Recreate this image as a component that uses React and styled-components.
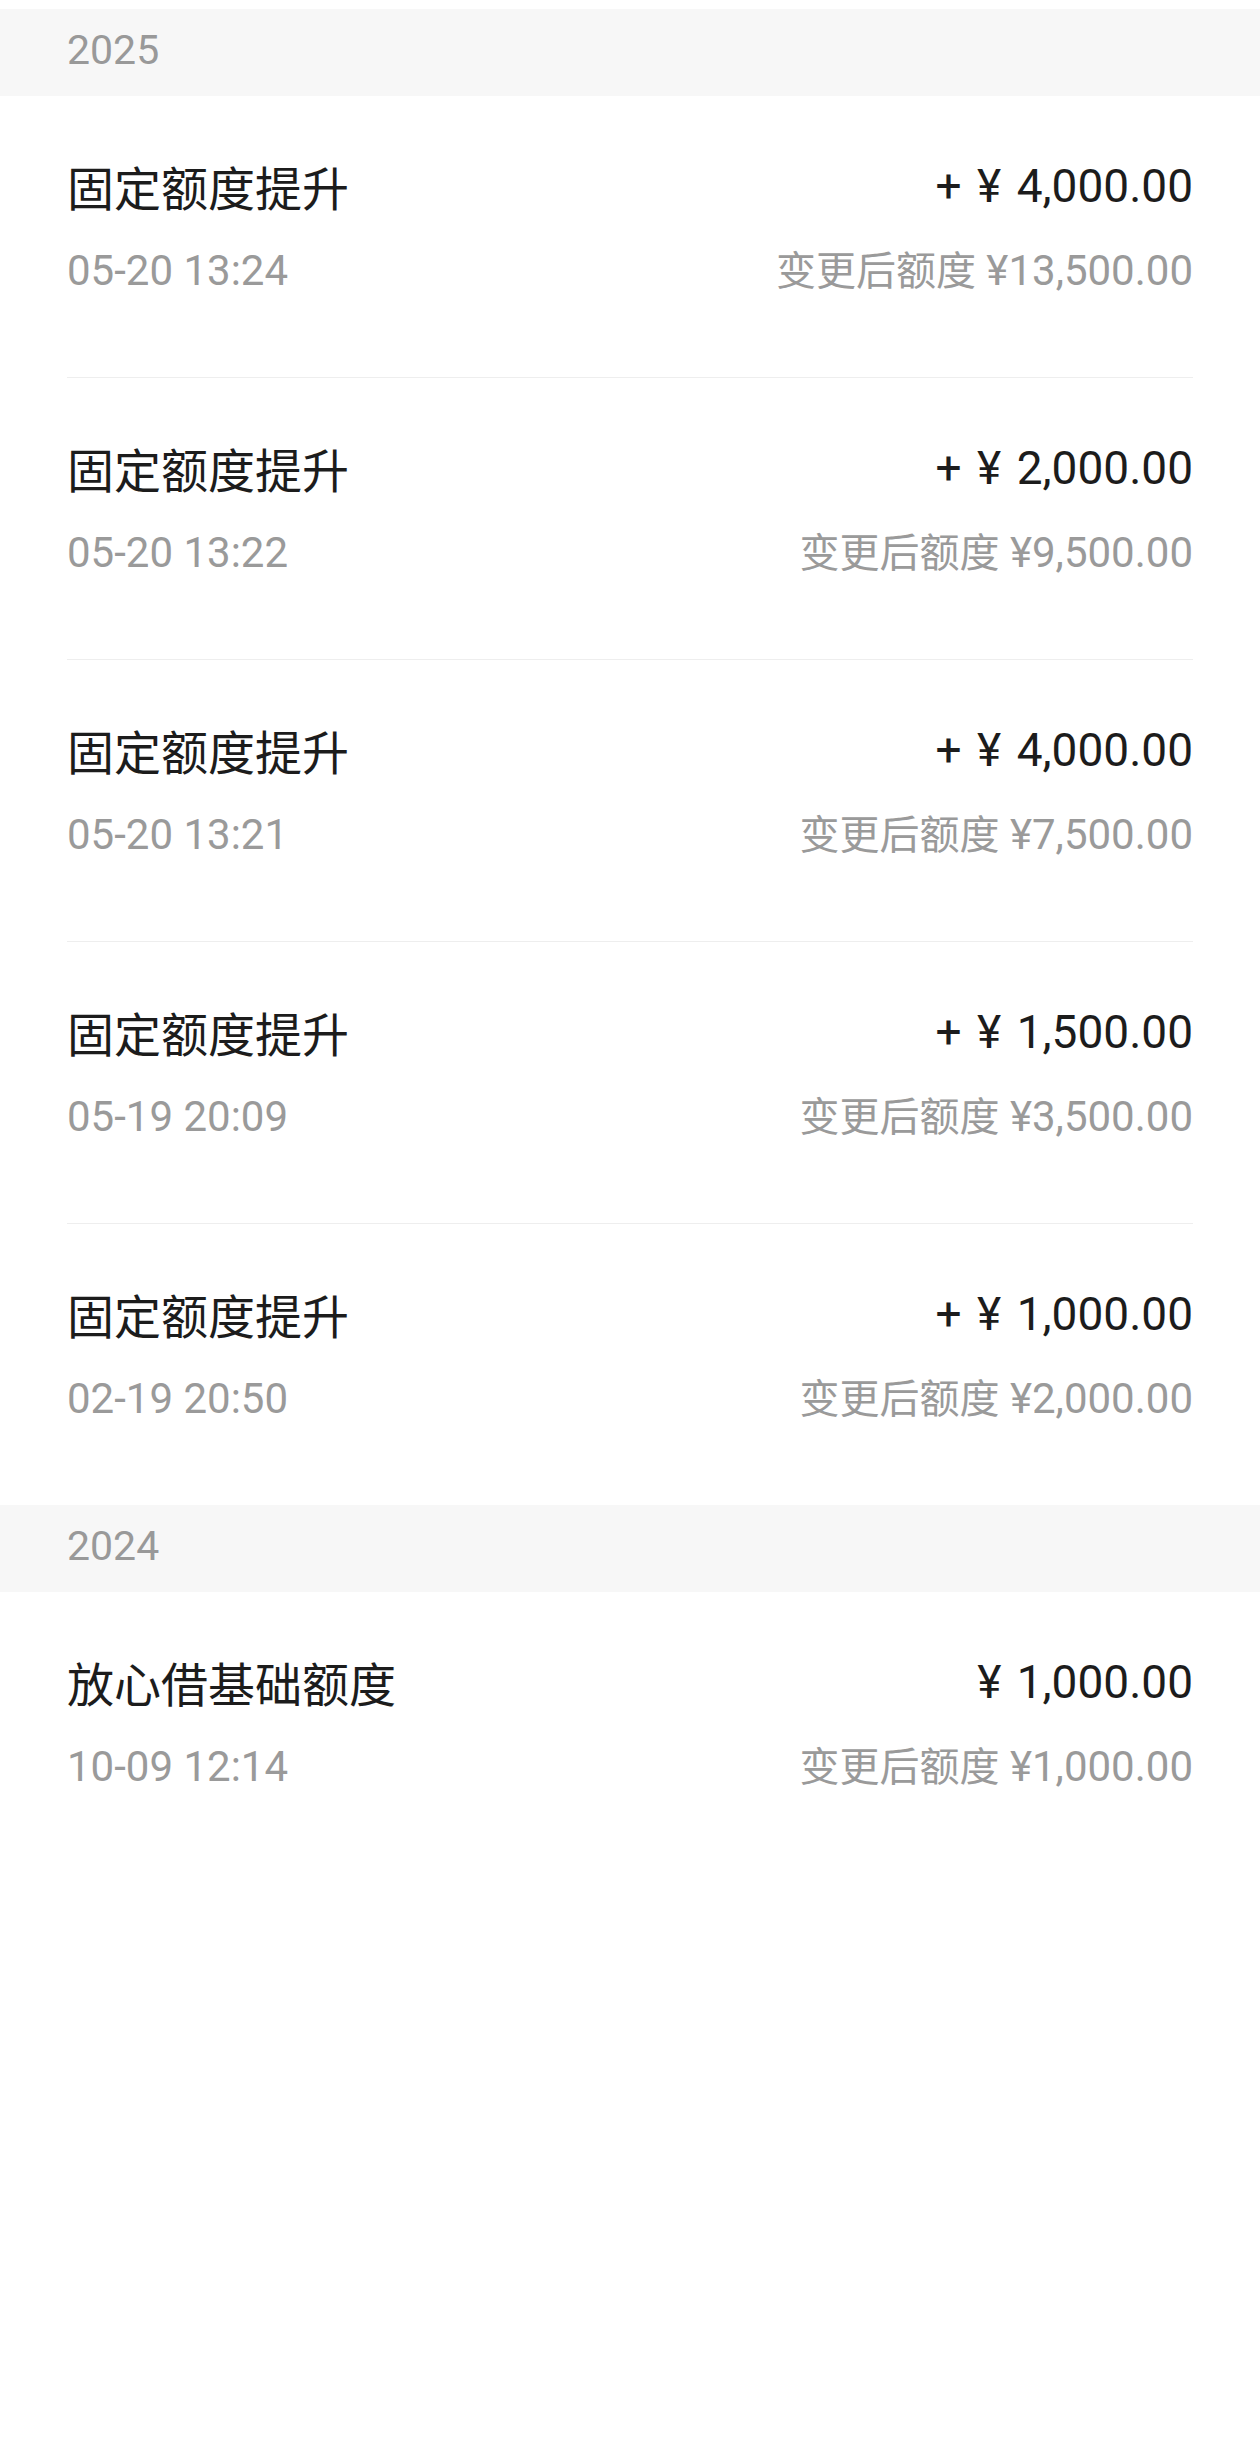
import React from "react";
import styled, { createGlobalStyle } from "styled-components";

const GlobalStyle = createGlobalStyle`
  html, body {
    margin: 0;
    padding: 0;
    background: #ffffff;
  }
  body {
    font-family: Roboto, "Noto Sans CJK SC", sans-serif;
    -webkit-font-smoothing: antialiased;
  }
`;

const Page = styled.div`
  width: 1260px;
  min-height: 2456px;
  background: #ffffff;
  padding-top: 9px;
  box-sizing: border-box;
`;

const YearBar = styled.div`
  height: 87px;
  background: #f7f7f7;
  display: flex;
  align-items: center;
  padding: 0 67px 4px;
  box-sizing: border-box;
  font-size: 41px;
  color: #999999;
  line-height: 1;
`;

const Row = styled.div`
  margin: 0 67px;
  padding: 62px 0 81px;
  display: flex;
  flex-direction: column;
  gap: 32px;
  border-bottom: ${(p) => (p.$last ? "none" : "1px solid #eeeeee")};
`;

const Line = styled.div`
  display: flex;
  justify-content: space-between;
  align-items: center;
  height: ${(p) => p.$h}px;
  overflow: visible;
`;

const Title = styled.span`
  font-family: "Noto Sans CJK SC", sans-serif;
  font-size: 47px;
  line-height: 56px;
  color: #1c1c1c;
`;

const Amount = styled.span`
  font-family: Roboto, "Noto Sans CJK SC", sans-serif;
  font-size: 46px;
  line-height: 56px;
  color: #1c1c1c;
  white-space: pre;
  word-spacing: 4px;
`;

const Meta = styled.span`
  font-family: Roboto, "Noto Sans CJK SC", sans-serif;
  font-size: 42px;
  line-height: 50px;
  color: #9a9a9a;
  white-space: pre;
`;

const SubLabel = styled.span`
  font-family: "Noto Sans CJK SC", sans-serif;
  font-size: 40px;
  line-height: 1;
`;

const groups = [
  {
    year: "2025",
    items: [
      { title: "固定额度提升", amount: "+ ¥ 4,000.00", time: "05-20 13:24", after: "¥13,500.00" },
      { title: "固定额度提升", amount: "+ ¥ 2,000.00", time: "05-20 13:22", after: "¥9,500.00" },
      { title: "固定额度提升", amount: "+ ¥ 4,000.00", time: "05-20 13:21", after: "¥7,500.00" },
      { title: "固定额度提升", amount: "+ ¥ 1,500.00", time: "05-19 20:09", after: "¥3,500.00" },
      { title: "固定额度提升", amount: "+ ¥ 1,000.00", time: "02-19 20:50", after: "¥2,000.00" },
    ],
  },
  {
    year: "2024",
    items: [
      { title: "放心借基础额度", amount: "¥ 1,000.00", time: "10-09 12:14", after: "¥1,000.00" },
    ],
  },
];

export default function App() {
  return (
    <>
      <GlobalStyle />
      <Page>
        {groups.map((g) => (
          <section key={g.year}>
            <YearBar>{g.year}</YearBar>
            {g.items.map((it, i) => (
              <Row key={i} $last={i === g.items.length - 1}>
                <Line $h={56}>
                  <Title>{it.title}</Title>
                  <Amount>{it.amount}</Amount>
                </Line>
                <Line $h={50}>
                  <Meta>{it.time}</Meta>
                  <Meta>
                    <SubLabel>变更后额度</SubLabel> {it.after}
                  </Meta>
                </Line>
              </Row>
            ))}
          </section>
        ))}
      </Page>
    </>
  );
}
